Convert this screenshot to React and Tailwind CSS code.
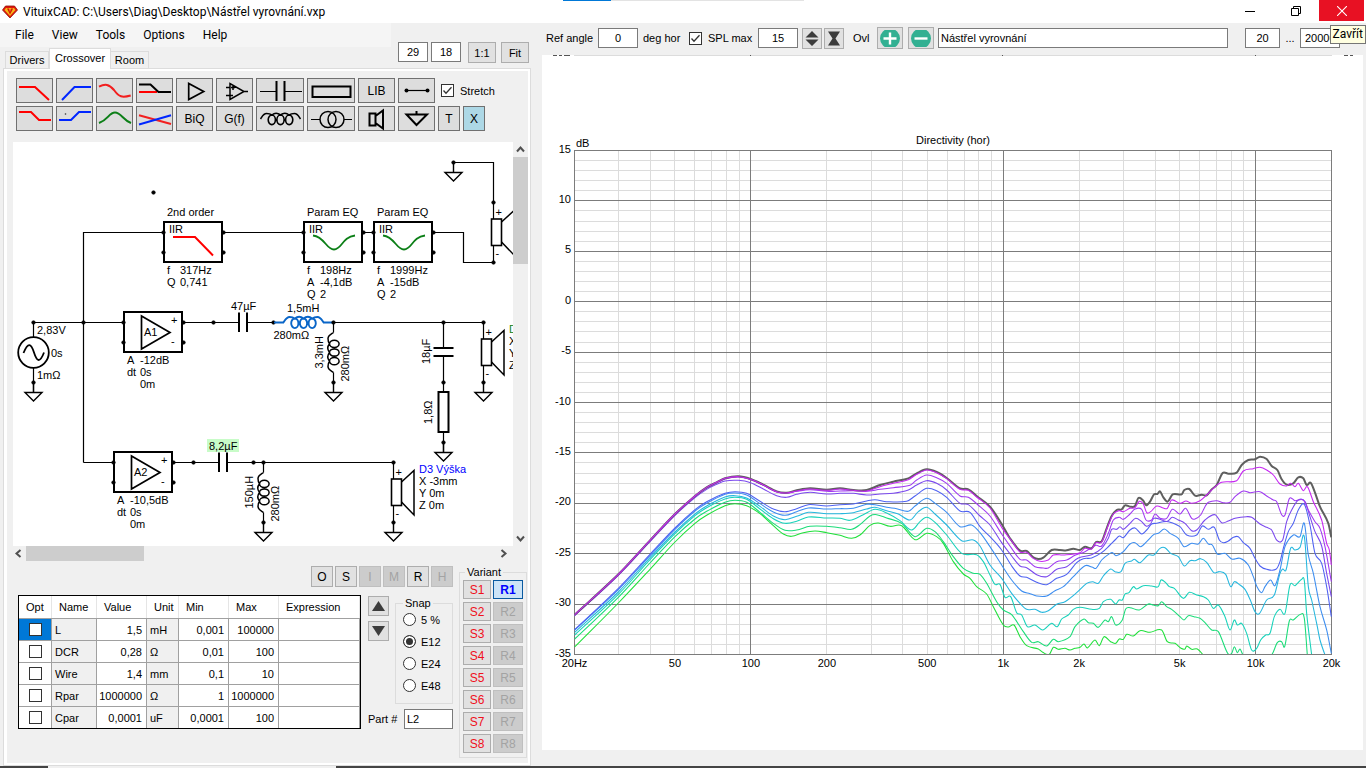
import clsx from "clsx";

const BTN = "flex items-center justify-center border border-[#adadad] bg-[#e1e1e1]";
const TOOL = "flex items-center justify-center h-[25px] border border-[#707070] bg-[#dddddd] text-[12px] leading-none shrink-0";
const FIELD = "border border-[#7a7a7a] bg-white outline-none h-5";

/* ── Small controls ── */

const Tick = ({ label, id, checked }) => (
  <span className="flex items-center gap-[6px] whitespace-nowrap">
    <span className="relative block size-[13px]">
      <input id={id} type="checkbox" defaultChecked={checked} className="peer block size-[13px] appearance-none border border-[#333] bg-white" aria-label={label} />
      <svg viewBox="0 0 13 13" className="pointer-events-none absolute inset-0 hidden size-[13px] peer-checked:block" fill="none" stroke="#333" strokeWidth="1.3">
        <path d="M2.5 6.5 5 9.2 10.5 3.2" />
      </svg>
    </span>
    {label && <label htmlFor={id}>{label}</label>}
  </span>
);

const Logo = () => (
  <svg width="16" height="14" viewBox="0 0 16 14">
    <path d="M3.5 1h9L15.5 5 8 13 .5 5z" fill="#e3170a" stroke="#8d1207" strokeWidth=".8" />
    <path d="M4 3h8l1.5 2L8 11 2.5 5z" fill="#f6b919" />
    <path d="M5 3.6h2L8 7l1-3.4h2.2L8 9.6z" fill="#d51408" />
  </svg>
);

const Chevron = ({ d }) => (
  <svg width="15" height="15" viewBox="0 0 15 15" fill="none" stroke="#505050" strokeWidth="2"><path d={d} /></svg>
);

/* ── Toolbar above the schematic ── */

const COIL = "M-20 0C-18 -3 -17 -5.5 -14 -5.5C-11.5 -5.5 -10 -5 -8.7 -4Q-4.4 -7.5 0 -4Q4.4 -7.5 8.7 -4C10 -5 11.5 -5.5 14 -5.5C17 -5.5 18 -3 20 0M-12.3 .8A3.6 4.8 0 1 1 -5.1 .8A3.6 4.8 0 1 1 -12.3 .8M-3.6 .8A3.6 4.8 0 1 1 3.6 .8A3.6 4.8 0 1 1 -3.6 .8M5.1 .8A3.6 4.8 0 1 1 12.3 .8A3.6 4.8 0 1 1 5.1 .8";

const icons = {
  "Low pass": <path d="M3 9H19L33 22" stroke="#f00" />,
  "High pass": <path d="M6 22 18.5 9H35" stroke="#0026ff" />,
  "Shelf": <path d="M3 8.7C9 5.5 13 6 18 12C23 19 26 20 34.7 17.5" stroke="#f21f1f" />,
  "Notch": <><path d="M3 14H21" stroke="#f00" /><path d="M3 6.5H14.5L22.5 14H35" stroke="#000" /></>,
  "Buffer": <path d="M12.7 5.5V21.5L27.7 13.5z" stroke="#000" strokeWidth="1.7" />,
  "Op amp": <path d="M14 5.5V21.5L28 13.5zM28 13.5H32M10 9.5H14M10 17.5H17M15 9.5H19M17 7.5V12" stroke="#000" strokeWidth="1.5" />,
  "Low shelf": <path d="M3 6H15L23 14H35" stroke="#f00" />,
  "High shelf": <><path d="M3 14H15L23 6H35" stroke="#0026ff" /><circle cx="9.5" cy="8" r=".8" fill="#333" stroke="none" /></>,
  "Peak": <path d="M3 17C12 14 13 6.5 19 6.5S27 14 35 17" stroke="#0c7f17" />,
  "Cross": <><path d="M3 9.3 35 18" stroke="#f21f1f" /><path d="M3 18.5 35 9.3" stroke="#0026ff" /></>,
  "Speaker": <path d="M11.5 7.5H17.5V19.5H11.5zM17.5 10 25 4.5V22.5L17.5 17" stroke="#000" />,
  "Wire": <><path d="M8 12.5H30" stroke="#000" strokeWidth="1.2" /><circle cx="8.5" cy="12.5" r="2" fill="#000" stroke="none" /><circle cx="29.5" cy="12.5" r="2" fill="#000" stroke="none" /></>,
  "Ground": <path d="M18.5 5V8.5M8.5 8.5H29L18.5 19z" stroke="#000" />,
};

const wideIcons = {
  "Capacitor": <><path d="M4 13.5H20.5M29 13.5H46" stroke="#000" strokeWidth="1.2" /><path d="M20.5 3V23M28.5 3V23" stroke="#000" /></>,
  "Resistor": <path d="M5.5 8.5H43.5V19H5.5z" stroke="#000" />,
  "Coil": <path d={COIL} transform="translate(24.5 13)" stroke="#000" strokeWidth="1.6" />,
  "Transformer": <><path d="M4 13.5H13M37 13.5H45" stroke="#000" strokeWidth="1.2" /><circle cx="21" cy="13.5" r="8" stroke="#000" strokeWidth="1.5" /><circle cx="29" cy="13.5" r="8" stroke="#000" strokeWidth="1.5" /></>,
};

const toolRows = [
  ["Low pass", "High pass", "Shelf", "Notch", "Buffer", "Op amp", "Capacitor", "Resistor", "LIB", "Wire"],
  ["Low shelf", "High shelf", "Peak", "Cross", "BiQ", "G(f)", "Coil", "Transformer", "Speaker", "Ground"],
];

const ToolButton = ({ name }) => {
  const wide = wideIcons[name];
  const icon = icons[name] || wide;
  return (
    <button aria-label={name} className={clsx(TOOL, wide ? "w-12" : "w-[37px]")}>
      {icon ? (
        <svg className="-m-px shrink-0" width={wide ? 48 : 37} height="25" viewBox={wide ? "0 0 48 25" : "0 0 37 25"} fill="none" strokeWidth="2">{icon}</svg>
      ) : name}
    </button>
  );
};

/* ── Schematic symbols ── */

const Dot = ({ x, y }) => <circle cx={x} cy={y} r="1.8" fill="#000" strokeWidth="0.6" />;

const Ground = ({ x, y }) => <path d={`M${x} ${y - 10}V${y}M${x - 8.5} ${y}H${x + 8.5}L${x} ${y + 8.5}z`} fill="#fff" strokeWidth="1.4" />;

const T = ({ x, y, children, fill = "#000", rot }) => (
  <text x={x} y={y} fill={fill} stroke="none" transform={rot ? `rotate(-90 ${x} ${y})` : undefined}>{children}</text>
);

const Block = ({ x, y }) => (
  <g>
    <rect x={x} y={y} width="58" height="40" fill="#fff" strokeWidth="2" />
    <Dot x={x - 0.5} y={y + 10.5} /><Dot x={x - 0.5} y={y + 30.5} />
    <Dot x={x + 59.5} y={y + 10.5} /><Dot x={x + 59.5} y={y + 30.5} />
  </g>
);

const Params = ({ x, y, rows }) => rows.map(([k, v], i) => (
  <g key={i}><T x={x} y={y + i * 12}>{k}</T><T x={x + 13} y={y + i * 12}>{v}</T></g>
));

const Amp = ({ x, y, name, gain }) => (
  <g>
    <Block x={x} y={y} />
    <path d={`M${x + 17.5} ${y + 4}V${y + 37}L${x + 46} ${y + 20.5}z`} fill="#fff" strokeWidth="1.7" />
    <T x={x + 20} y={y + 24}>{name}</T>
    <T x={x + 47} y={y + 12}>+</T>
    <T x={x + 47} y={y + 33}>-</T>
    <Params x={x + 3} y={y + 52} rows={[["A", gain], ["dt", "0s"], ["", "0m"]]} />
  </g>
);

const Filter = ({ x, name, rows, lowpass }) => (
  <g>
    <Block x={x} y={222} />
    <T x={x + 3} y={216}>{name}</T>
    <T x={x + 5} y={233}>IIR</T>
    {lowpass
      ? <path d={`M${x + 9} 237H${x + 31}L${x + 49} 255.5`} stroke="#f00" strokeWidth="2" />
      : <path d={`M${x + 9} 235.5C${x + 21} 237 ${x + 22} 249.5 ${x + 30} 249.5S${x + 38} 237 ${x + 51} 235.5`} stroke="#0c7f17" strokeWidth="1.8" />}
    <Params x={x + 3} y={274} rows={rows} />
  </g>
);

// y is the top of the coil box
const Driver = ({ x, y }) => (
  <g>
    <path d={`M${x} ${y - 17}V${y + 43}`} />
    <path d={`M${x + 8} ${y + 3}L${x + 20.5} ${y - 8.5}V${y + 36}L${x + 8} ${y + 23}`} fill="#fff" strokeWidth="1.5" />
    <rect x={x - 2} y={y} width="10" height="26.5" fill="#fff" strokeWidth="1.6" />
    <Dot x={x} y={y - 16.5} /><Dot x={x} y={y + 43.5} />
    <T x={x + 2} y={y - 3}>+</T>
    <T x={x + 2} y={y + 38}>-</T>
  </g>
);

const Shunt = ({ x, y, value }) => (
  <g>
    <path d={`M${x} ${y}V${y + 10}M${x} ${y + 50}V${y + 60}`} />
    <path d={COIL} transform={`translate(${x} ${y + 30}) rotate(-90)`} strokeWidth="1.5" />
    <Dot x={x} y={y} /><Dot x={x} y={y + 60} />
    <Ground x={x} y={y + 70} />
    <T x={x - 11} y={y + 46} rot>{value}</T>
    <T x={x + 15} y={y + 59} rot>280mΩ</T>
  </g>
);

const Schematic = () => (
  <svg className="block shrink-0 bg-white" width="500" height="404" viewBox="13 142 500 404" fill="none" stroke="#000" strokeWidth="1.2" fontSize="11" fontFamily="Liberation Sans, sans-serif">
    <path d="M83.5 462.5V232.5H163M223 232.5H303M363 232.5H375M433 232.5H463.5V262.5H493.5M453.5 162.5H493.5V203M33.5 322.5H123M183 322.5H239M247 322.5H283M333.5 322.5H483.5M83.5 462.5H113M173 462.5H219M227 462.5H393.5" />
    <Dot x={153.5} y={192.5} />
    <Filter x={164} name="2nd order" lowpass rows={[["f", "317Hz"], ["Q", "0,741"]]} />
    <Filter x={304} name="Param EQ" rows={[["f", "198Hz"], ["A", "-4,1dB"], ["Q", "2"]]} />
    <Filter x={374} name="Param EQ" rows={[["f", "1999Hz"], ["A", "-15dB"], ["Q", "2"]]} />
    <Ground x={453.5} y={172.5} /><Dot x={453.5} y={162.5} />
    <Driver x={493.5} y={219} />

    <path d="M33.5 322.5V392" />
    <circle cx="33.5" cy="352.5" r="15.3" fill="#fff" strokeWidth="1.8" />
    <path d="M23.5 353C28 342 31 343 34 352.5S40 363 44 352.5" strokeWidth="1.8" />
    <Dot x={33.5} y={322.5} /><Dot x={33.5} y={382.5} /><Dot x={83.5} y={322.5} />
    <Ground x={33.5} y={392.5} />
    <T x={37} y={334}>2,83V</T><T x={51} y={357}>0s</T><T x={37} y={379}>1mΩ</T>

    <Amp x={124} y={312} name="A1" gain="-12dB" />
    <Amp x={114} y={452} name="A2" gain="-10,5dB" />
    <Dot x={213.5} y={322.5} /><Dot x={273.5} y={322.5} />
    <path d="M239 312.5V332M247 312.5V332M219 452.5V472M227 452.5V472M433.5 348H453.5M433.5 356H453.5" strokeWidth="2" />
    <T x={231} y={310}>47µF</T>
    <g stroke="#0a66c8" strokeWidth="1.9">
      <path d="M274 322.5H284M323 322.5H333" />
      <path d={COIL} transform="translate(303.5 322.5)" />
    </g>
    <T x={287} y={312}>1,5mH</T><T x={273.5} y={339}>280mΩ</T>
    <Shunt x={333.5} y={322.5} value="3,3mH" />
    <Shunt x={263.5} y={462.5} value="150µH" />

    <path d="M443.5 322.5V348M443.5 356V452" />
    <rect x="438.5" y="392" width="10" height="40" fill="#fff" strokeWidth="2" />
    <Dot x={443.5} y={322.5} /><Dot x={443.5} y={382.5} /><Dot x={443.5} y={442.5} />
    <Ground x={443.5} y={452.5} />
    <T x={430} y={364} rot>18µF</T><T x={432} y={424} rot>1,8Ω</T>

    <Driver x={483.5} y={339} /><Ground x={483.5} y={392.5} />
    <T x={509} y={333} fill="#0c7f17">D</T><T x={509} y={345}>X</T><T x={509} y={357}>Y</T><T x={509} y={369}>Z</T>

    <rect x="207" y="439" width="32" height="13" fill="#c8fcc8" stroke="none" />
    <T x={209} y={450}>8,2µF</T>
    <Dot x={193.5} y={462.5} /><Dot x={253.5} y={462.5} />
    <Driver x={393.5} y={479} /><Ground x={393.5} y={532.5} />
    <T x={419} y={473} fill="#0000ff">D3 Výška</T>
    <T x={419} y={485}>X -3mm</T><T x={419} y={497}>Y 0m</T><T x={419} y={509}>Z 0m</T>
  </svg>
);

/* ── Directivity chart ── */

// x,y pairs in thirds of a pixel, measured from (560, 440)
const curves = [
  { color: "#1fe03a", p: "44,621 175,489 270,388 345,306 405,250 440,226 495,197 525,191 560,197 600,221 640,257 670,282 695,289 730,278 765,273 800,278 840,286 875,295 900,285 930,256 955,249 990,259 1025,257 1065,299 1100,280 1130,290 1150,310 1180,365 1210,402 1230,415 1250,440 1280,462 1300,500 1330,555 1345,561 1362,555 1380,590 1400,617 1435,627 1448,637 1468,643 1480,622 1495,628 1515,625 1530,630 1545,625 1560,622 1572,612 1582,624 1605,600 1618,617 1632,590 1652,605 1667,610 1678,597 1690,598 1700,583 1720,588 1740,572 1770,577 1805,570 1822,605 1845,610 1863,625 1875,627 1880,618 1895,628 1912,627 1930,645" },
  { color: "#1bdc78", p: "44,597 175,472 270,369 345,290 405,237 440,214 495,187 525,181 560,187 600,217 640,250 675,271 710,270 750,259 800,259 840,263 875,268 900,254 930,228 950,224 980,234 1025,250 1065,290 1100,265 1125,275 1150,305 1180,350 1210,385 1240,400 1260,403 1280,430 1310,485 1330,510 1355,524 1390,575 1415,607 1435,605 1460,618 1480,598 1495,605 1530,590 1545,560 1572,537 1585,548 1600,550 1615,562 1635,540 1645,545 1655,530 1667,555 1687,540 1697,507 1710,503 1738,510 1765,492 1780,495 1795,497 1805,485 1820,500 1835,508 1860,530 1872,540 1885,527 1902,530 1920,535 1935,548 1955,570 1975,575 2003,640 2015,640 2023,620 2032,638 2040,627 2050,645 2134,645 2152,608 2165,605 2174,620 2188,543 2200,540 2222,523 2233,535 2242,645" },
  { color: "#17d2ba", p: "44,585 175,463 270,359 345,281 405,227 440,203 495,177 525,172 560,178 600,207 640,236 675,250 710,244 745,231 800,234 840,235 870,241 910,224 945,208 980,219 1020,242 1055,270 1080,245 1100,232 1125,247 1160,285 1205,340 1250,344 1270,365 1290,405 1305,433 1320,433 1335,472 1352,470 1370,518 1385,525 1402,560 1425,555 1448,570 1475,550 1492,560 1505,537 1525,525 1540,508 1560,502 1595,508 1618,505 1630,485 1652,478 1667,492 1677,480 1687,480 1695,462 1707,458 1720,440 1730,447 1750,437 1775,438 1795,440 1803,420 1817,428 1828,440 1843,445 1870,475 1888,457 1910,465 1930,470 1945,480 1960,505 1975,495 1995,530 2010,570 2023,540 2032,555 2045,550 2060,580 2075,630 2090,625 2102,600 2117,585 2130,580 2143,530 2160,508 2175,520 2190,435 2205,437 2225,418 2233,422 2240,520 2255,645" },
  { color: "#25b7de", p: "44,577 175,456 270,353 345,276 405,222 440,198 495,171 525,167 560,174 600,199 640,228 675,239 710,229 745,217 800,221 840,221 880,218 920,207 945,202 980,212 1015,222 1050,240 1075,215 1100,202 1125,222 1160,255 1205,302 1240,300 1260,318 1290,375 1325,415 1355,460 1380,490 1400,508 1425,508 1445,517 1465,512 1490,493 1515,485 1550,458 1580,430 1598,425 1615,430 1630,408 1652,387 1665,395 1683,395 1695,370 1715,363 1723,358 1740,368 1765,345 1782,345 1800,325 1815,323 1832,340 1855,350 1873,378 1890,362 1905,362 1922,356 1940,367 1962,398 1978,395 1997,403 2012,440 2023,425 2040,435 2055,448 2070,478 2085,515 2098,521 2120,480 2143,465 2160,400 2168,387 2178,390 2192,325 2205,330 2220,322 2233,290 2245,440 2255,480 2272,560 2280,600 2295,645" },
  { color: "#3c8df0", p: "44,570 175,449 270,347 345,268 405,213 440,190 495,163 525,159 560,165 600,191 640,216 675,226 710,215 745,204 800,207 840,206 880,205 920,193 945,194 980,202 1010,206 1045,214 1065,198 1100,175 1125,190 1160,217 1200,260 1235,255 1260,278 1290,320 1325,375 1355,420 1385,453 1410,461 1430,468 1460,468 1485,452 1510,440 1540,410 1575,377 1598,382 1608,385 1625,360 1650,340 1658,338 1668,347 1690,335 1710,312 1725,308 1742,320 1760,305 1782,283 1795,280 1813,267 1830,280 1855,295 1872,320 1895,310 1915,312 1930,295 1945,312 1957,315 1972,342 1995,340 2015,357 2040,355 2065,375 2080,410 2090,438 2105,458 2115,440 2132,420 2145,437 2160,390 2175,320 2200,285 2220,290 2233,250 2245,345 2260,400 2280,500 2300,570 2314,640" },
  { color: "#4f62f2", p: "44,569 175,445 270,343 345,264 405,209 440,185 495,160 525,155 560,160 600,184 640,207 675,215 710,206 745,194 800,198 840,194 880,192 920,183 945,179 980,185 1040,184 1065,168 1100,145 1130,152 1160,172 1200,213 1230,217 1260,260 1290,290 1325,330 1355,378 1380,408 1400,412 1430,427 1460,434 1490,415 1520,403 1550,368 1570,356 1595,354 1625,338 1650,315 1665,300 1678,288 1690,293 1710,270 1725,264 1745,282 1760,270 1775,252 1790,250 1810,245 1825,245 1860,260 1880,285 1910,285 1927,258 1945,268 1963,262 1978,300 1990,308 2005,303 2020,292 2035,290 2050,308 2070,325 2085,355 2100,378 2120,388 2148,388 2160,365 2170,325 2185,275 2200,250 2215,210 2233,193 2250,255 2265,340 2285,370 2300,440 2314,530" },
  { color: "#7a48ee", p: "44,527 175,406 270,305 345,226 405,173 440,148 470,133 495,123 535,121 572,128 610,147 650,167 680,172 710,163 750,157 800,162 840,160 880,160 920,165 960,162 1000,160 1045,150 1070,135 1100,122 1130,130 1160,150 1200,190 1225,194 1260,228 1290,255 1325,308 1355,348 1380,378 1400,383 1430,404 1460,410 1490,388 1520,380 1555,354 1595,344 1625,325 1645,295 1655,268 1670,268 1680,260 1690,268 1710,250 1727,235 1745,245 1758,258 1770,254 1782,235 1805,240 1822,244 1837,232 1855,240 1875,250 1895,272 1910,270 1935,240 1965,224 1985,248 2005,243 2025,235 2060,230 2075,232 2100,252 2120,262 2135,270 2150,300 2168,300 2180,245 2195,210 2215,180 2235,185 2250,230 2265,275 2285,318 2300,400 2314,470" },
  { color: "#a03af2", p: "44,526 175,405 270,303 345,224 405,170 440,144 470,129 495,117 535,111 572,119 610,136 650,156 680,160 710,154 750,149 800,154 840,153 880,152 920,154 960,148 1000,143 1050,136 1070,120 1100,105 1130,113 1160,130 1200,168 1225,172 1260,200 1290,228 1325,282 1355,325 1380,358 1400,360 1425,380 1450,384 1465,384 1490,365 1520,360 1545,346 1575,335 1608,316 1625,318 1645,280 1660,240 1678,232 1690,238 1710,222 1725,207 1745,208 1758,240 1775,240 1785,222 1800,235 1820,235 1837,208 1860,222 1877,205 1895,235 1905,237 1922,225 1935,200 1945,187 1970,182 1990,188 2010,187 2025,170 2050,153 2070,158 2100,155 2120,168 2140,180 2150,185 2165,224 2175,225 2188,176 2205,182 2230,180 2245,210 2265,245 2280,265 2295,320 2314,425" },
  { color: "#5f5f5f", width: 6, p: "44,524 175,403 270,301 345,222 405,168 440,142 470,127 495,115 535,109 572,117 610,134 650,154 680,158 710,151 750,145 800,149 840,145 880,150 920,150 960,135 1000,125 1045,115 1070,100 1100,88 1130,96 1160,114 1200,145 1225,148 1250,168 1290,200 1325,252 1350,295 1380,332 1400,333 1420,352 1435,357 1450,353 1475,330 1500,330 1520,331 1540,326 1560,330 1575,320 1595,325 1608,306 1625,304 1640,265 1655,228 1670,210 1685,208 1695,196 1710,200 1725,198 1735,174 1750,182 1758,196 1770,185 1782,163 1792,162 1800,154 1810,172 1823,185 1838,163 1865,163 1873,150 1888,147 1905,167 1925,164 1940,166 1955,148 1970,135 1988,99 2005,101 2030,98 2045,75 2065,60 2085,58 2100,50 2120,57 2135,78 2152,90 2165,118 2180,134 2200,130 2215,112 2230,115 2240,135 2252,128 2265,158 2280,200 2305,250 2314,292" },
  { color: "#c626f2", p: "44,524 175,403 270,301 345,222 405,168 440,142 470,127 495,115 535,110 572,118 610,135 650,155 680,159 710,153 750,147 800,151 840,147 880,151 920,153 960,140 1000,130 1045,119 1070,103 1100,90 1130,98 1160,116 1200,148 1225,151 1250,171 1290,204 1325,262 1355,303 1380,336 1400,337 1420,355 1440,364 1465,360 1480,345 1510,345 1560,338 1575,325 1595,327 1608,308 1625,306 1645,255 1660,222 1678,212 1690,215 1710,205 1725,203 1738,184 1750,192 1760,218 1772,215 1790,198 1810,204 1822,205 1835,180 1860,190 1878,183 1895,190 1920,182 1940,165 1960,145 1985,127 2030,122 2050,93 2080,86 2100,82 2120,90 2140,105 2160,132 2180,138 2192,130 2205,140 2215,130 2230,152 2242,140 2260,185 2285,240 2300,310 2308,330 2314,375" },
];

function smooth(str) {
  const p = str.split(" ").map((s) => s.split(",").map(Number));
  let d = `M${p[0]}`;
  for (let i = 0; i < p.length - 1; i++) {
    const a = p[i - 1] || p[i];
    const b = p[i];
    const c = p[i + 1];
    const e = p[i + 2] || c;
    // handle length follows the x step, slope comes from the neighbours
    const k = (c[0] - b[0]) / 3;
    const s1 = (c[1] - a[1]) / (c[0] - a[0]);
    const s2 = (e[1] - b[1]) / (e[0] - b[0]);
    d += `C${b[0] + k} ${b[1] + s1 * k} ${c[0] - k} ${c[1] - s2 * k} ${c}`;
  }
  return d;
}

const fx = (f) => 574.5 + (Math.log10(f / 20) / 3) * 757;
const dy = (db) => 150.5 + (15 - db) * 10.08;

const minorFreqs = [30, 40, 50, 60, 70, 80, 90, 200, 300, 400, 500, 600, 700, 800, 900, 2000, 3000, 4000, 5000, 6000, 7000, 8000, 9000];
const freqLabels = [[20, "20Hz"], [50, "50"], [100, "100"], [200, "200"], [500, "500"], [1000, "1k"], [2000, "2k"], [5000, "5k"], [10000, "10k"], [20000, "20k"]];
const dbs = Array.from({ length: 51 }, (_, i) => 15 - i);

const Chart = () => (
  <svg className="block w-full" viewBox="542 55 821 695" fontSize="11" fontFamily="Liberation Sans, sans-serif">
    <clipPath id="plot"><rect x="574" y="150" width="758" height="504" /></clipPath>
    <path d="M574 55.5H1332" stroke="#dcdcdc" />
    <path d="M553 55.5H557M559 55.5H562M564 55.5H570M750 55.5H751M1002 55.5H1003M1255 55.5H1256M1344 55.5H1348M1350 55.5H1353" stroke="#555" />
    <g stroke="#dcdcdc" shapeRendering="crispEdges">
      {dbs.filter((d) => d % 5).map((d) => <path key={d} d={`M574 ${dy(d)}H1332`} />)}
      {minorFreqs.map((f) => <path key={f} d={`M${fx(f)} 150V654`} />)}
    </g>
    <g stroke="#7c7c7c" shapeRendering="crispEdges">
      {dbs.filter((d) => d % 5 === 0).map((d) => <path key={d} d={`M574 ${dy(d)}H1332`} />)}
      {[20, 100, 1000, 10000, 20000].map((f) => <path key={f} d={`M${fx(f)} 150V655`} />)}
    </g>
    <g clipPath="url(#plot)" fill="none">
      {curves.map((c) => (
        <path key={c.color} d={smooth(c.p)} transform="translate(560 440) scale(0.33333)" stroke={c.color} strokeWidth={c.width || 3.2} strokeLinejoin="round" />
      ))}
    </g>
    <text x="953" y="144" textAnchor="middle">Directivity (hor)</text>
    <text x="576" y="147">dB</text>
    {dbs.filter((d) => d % 5 === 0).map((d) => <text key={d} x="571" y={dy(d) + 2} textAnchor="end">{d}</text>)}
    {freqLabels.map(([f, t]) => <text key={f} x={fx(f)} y="667" textAnchor="middle">{t}</text>)}
  </svg>
);

/* ── Lower part of the crossover tab ── */

const rows = [
  ["L", "1,5", "mH", "0,001", "100000"],
  ["DCR", "0,28", "Ω", "0,01", "100"],
  ["Wire", "1,4", "mm", "0,1", "10"],
  ["Rpar", "1000000", "Ω", "1", "1000000"],
  ["Cpar", "0,0001", "uF", "0,0001", "100"],
];

const cell = "h-[22px] border-t border-r border-[#a0a0a0]";

const ParamTable = () => (
  <table className="w-[343px] table-fixed border-separate border-spacing-0 border border-black bg-white">
    <colgroup>
      <col className="w-[33px]" /><col className="w-[45px]" /><col className="w-[50px]" /><col className="w-8" /><col className="w-[50px]" /><col className="w-[50px]" /><col />
    </colgroup>
    <thead>
      <tr className="h-[22px] text-left">
        {["Opt", "Name", "Value", "Unit", "Min", "Max", "Expression"].map((h) => (
          <th key={h} className="border-r border-[#e5e5e5] pl-[7px] font-normal">{h}</th>
        ))}
      </tr>
    </thead>
    <tbody>
      {rows.map(([name, value, unit, min, max], i) => (
        <tr key={name}>
          <td className={clsx(cell, i === 0 && "bg-[#0078d7]")}>
            <span className="flex justify-center">
              <input type="checkbox" aria-label={`Optimize ${name}`} className="block size-[13px] appearance-none border border-[#333] bg-white" />
            </span>
          </td>
          <td className={clsx(cell, "bg-[#f0f0f0] pl-[3px]")}>{name}</td>
          <td className={clsx(cell, "pr-1 text-right")}>{value}</td>
          <td className={clsx(cell, "bg-[#f0f0f0] pl-[3px]")}>{unit}</td>
          <td className={clsx(cell, "pr-1 text-right")}>{min}</td>
          <td className={clsx(cell, "pr-1 text-right")}>{max}</td>
          <td className={cell}></td>
        </tr>
      ))}
    </tbody>
  </table>
);

const Snap = () => (
  <fieldset className="h-[109px] w-[58px] border border-[#dcdcdc] pl-[7px]">
    <legend className="px-[2px] leading-4">Snap</legend>
    <div className="flex flex-col gap-[9px] pt-[2px]">
      {["5 %", "E12", "E24", "E48"].map((s) => (
        <label key={s} className="flex h-[13px] items-center gap-[5px] whitespace-nowrap">
          <input type="radio" name="snap" defaultChecked={s === "E12"} className="size-[13px] shrink-0 appearance-none rounded-full border border-[#333] bg-white checked:bg-[#333] checked:shadow-[inset_0_0_0_2px_white]" />
          {s}
        </label>
      ))}
    </div>
  </fieldset>
);

const Variant = () => (
  <fieldset className="h-[194px] w-[68px] border border-[#dcdcdc] px-[3px]">
    <legend className="ml-[2px] px-[2px] leading-4">Variant</legend>
    <div className="grid grid-cols-[28px_30px] gap-x-[2px] gap-y-[3px] text-[12px]">
      {[1, 2, 3, 4, 5, 6, 7, 8].map((n) => (
        <div key={n} className="contents">
          <button className="h-[19px] border border-[#adadad] bg-[#e1e1e1] leading-none text-[#f0101c]">S{n}</button>
          <button
            disabled={n > 1}
            className={clsx("h-[19px] border leading-none", n === 1 ? "border-[#0a5aa0] bg-[#cce4f7] font-bold text-[#0000ff]" : "border-[#bfbfbf] bg-[#cccccc] text-[#a3a3a3]")}
          >
            R{n}
          </button>
        </div>
      ))}
    </div>
  </fieldset>
);

const Arrow = ({ d, label }) => (
  <button aria-label={label} className={clsx(BTN, "h-5 w-[21px]")}>
    <svg width="15" height="12" viewBox="0 0 15 12" fill="#3c3c3c"><path d={d} /></svg>
  </button>
);

const CrossoverTab = () => (
  <section className="ml-[3px] flex flex-1 flex-col border border-[#dcdcdc] bg-white p-[2px] pl-[3px]">
    <div className="flex-1 bg-[#f0f0f0]">
      <div className="flex flex-col gap-[3px] pt-[7px] pl-[9px]">
        <div className="flex items-center gap-[3px]">
          {toolRows[0].map((n) => <ToolButton key={n} name={n} />)}
          <span className="pl-[3px]"><Tick id="stretch" label="Stretch" checked /></span>
        </div>
        <div className="flex items-center gap-[3px]">
          {toolRows[1].map((n) => <ToolButton key={n} name={n} />)}
          <button className={clsx(TOOL, "w-[22px]")}>T</button>
          <button className="flex h-[25px] w-[22px] items-center justify-center border border-[#707070] bg-[#add8e6] text-[12px] leading-none">X</button>
        </div>
      </div>

      <div className="mt-[11px] ml-[6px] flex">
        <Schematic />
        <div className="flex w-[15px] flex-col items-center justify-between">
          <div>
            <Chevron d="M4 9.5 7.5 5.5 11 9.5" />
            <div className="h-[107px] w-[15px] bg-[#cdcdcd]" />
          </div>
          <Chevron d="M4 5.5 7.5 9.5 11 5.5" />
        </div>
      </div>
      <div className="ml-[4px] flex w-[500px]">
        <Chevron d="M9.5 4 5.5 7.5 9.5 11" />
        <div className="h-[15px] w-[118px] bg-[#cdcdcd]" />
        <span className="flex-1" />
        <Chevron d="M5.5 4 9.5 7.5 5.5 11" />
      </div>

      <div className="flex justify-between pr-px pl-[11px]">
        <div>
          <div className="flex justify-end gap-[2px] pt-[5px] text-[12px]">
            {["O", "S", "I", "M", "R", "H"].map((b) => {
              const off = "IMH".includes(b);
              return (
                <button key={b} disabled={off} className={clsx("h-[21px] w-[22px] border leading-none", off ? "border-[#bfbfbf] bg-[#cccccc] text-[#a3a3a3]" : "border-[#adadad] bg-[#e1e1e1]")}>{b}</button>
              );
            })}
          </div>
          <div className="flex gap-[7px] pt-2">
            <ParamTable />
            <div className="flex w-[85px] flex-col justify-between">
              <div className="flex justify-between">
                <div className="flex flex-col gap-[5px] pt-px">
                  <Arrow label="Move up" d="M7.5 1 14 11H1z" />
                  <Arrow label="Move down" d="M7.5 11 14 1H1z" />
                </div>
                <Snap />
              </div>
              <div className="flex items-center justify-between">
                <label htmlFor="part">Part #</label>
                <input id="part" defaultValue="L2" className={clsx(FIELD, "w-[49px] px-[2px]")} />
              </div>
            </div>
          </div>
        </div>
        <div className="pt-[3px]"><Variant /></div>
      </div>
    </div>
  </section>
);

/* ── Toolbar above the chart ── */

const ChartToolbar = () => (
  <div className="flex h-8 items-center pb-[2px] pl-[15px]">
    <label htmlFor="angle" className="w-[52px]">Ref angle</label>
    <input id="angle" defaultValue="0" className={clsx(FIELD, "w-10 text-center")} />
    <span className="w-[51px] pl-[5px]">deg hor</span>
    <span className="w-[69px]"><Tick id="splmax" label="SPL max" checked /></span>
    <input aria-label="SPL max value" defaultValue="15" className={clsx(FIELD, "w-10 text-center")} />
    <button aria-label="Expand range" className={clsx(BTN, "ml-1 h-[21px] w-5")}>
      <svg width="14" height="17" viewBox="0 0 14 17" fill="#3c3c3c"><path d="M7 1 13.5 7.5H.5zM7 16 13.5 9.5H.5z" /></svg>
    </button>
    <button aria-label="Shrink range" className={clsx(BTN, "ml-[2px] h-[21px] w-5")}>
      <svg width="14" height="17" viewBox="0 0 14 17" fill="#3c3c3c"><path d="M1 1.5H13L8.5 8.5 13 15.5H1L5.5 8.5z" /></svg>
    </button>
    <span className="w-[33px] pl-[9px]">Ovl</span>
    <button aria-label="Add overlay" className={clsx(BTN, "h-[22px] w-[26px]")}>
      <svg width="20" height="17" viewBox="0 0 20 17"><circle cx="10" cy="8.5" r="10" fill="#32b092" /><path d="M3.5 8.5H16.5M10 2.5V14.5" stroke="#fff" strokeWidth="2.4" /></svg>
    </button>
    <button aria-label="Remove overlay" className={clsx(BTN, "ml-[5px] h-[22px] w-[26px]")}>
      <svg width="20" height="17" viewBox="0 0 20 17"><circle cx="10" cy="8.5" r="10" fill="#32b092" /><path d="M3.5 8.5H16.5" stroke="#fff" strokeWidth="2.4" /></svg>
    </button>
    <input aria-label="Overlay name" defaultValue="Nástřel vyrovnání" className={clsx(FIELD, "ml-1 min-w-0 flex-1 px-[2px]")} />
    <input aria-label="Frequency from" defaultValue="20" className={clsx(FIELD, "ml-[17px] w-[35px] text-center")} />
    <span className="w-5 text-center">...</span>
    <input aria-label="Frequency to" defaultValue="20000" className={clsx(FIELD, "mr-[26px] w-10 px-1")} />
  </div>
);

const TitleBar = () => (
  <header className="relative flex h-[23px] items-center justify-between bg-white pl-[2px]">
    <div className="absolute inset-x-0 top-0 flex h-px">
      <span className="w-[563px]" /><span className="w-12 bg-[#0078d7]" /><span className="w-[193px] bg-[#e3e3e3]" />
    </div>
    <h1 className="flex items-center gap-[5px] font-[Roboto,sans-serif] text-[12px]"><Logo />VituixCAD: C:\Users\Diag\Desktop\Nástřel vyrovnání.vxp</h1>
    <div className="flex self-start">
      <button aria-label="Minimize" className="flex h-[21px] w-[46px] items-center justify-center">
        <svg width="10" height="10" viewBox="0 0 10 10"><path d="M0 5.5H10" stroke="#000" /></svg>
      </button>
      <button aria-label="Restore" className="flex h-[21px] w-[46px] items-center justify-center">
        <svg width="10" height="10" viewBox="0 0 10 10" fill="none" stroke="#000"><path d="M.5 2.5H7.5V9.5H.5zM2.5 2.5V.5H9.5V7.5H7.5" /></svg>
      </button>
      <button aria-label="Close" className="mr-[2px] flex h-[21px] w-[45px] items-center justify-center bg-[#e81123]">
        <svg width="10" height="10" viewBox="0 0 10 10" stroke="#fff" strokeWidth="1.1"><path d="M0 0 10 10M10 0 0 10" /></svg>
      </button>
    </div>
    <div role="tooltip" className="absolute top-[25px] right-0 z-10 h-[19px] border border-[#767676] bg-[#ffffe1] px-[2px] font-[Roboto,sans-serif] text-[12px] leading-[17px]">Zavřít</div>
  </header>
);

export default function App() {
  return (
    <div className="flex min-h-screen flex-col bg-[#f0f0f0] font-['Liberation_Sans',sans-serif] text-[11px] leading-4 text-black">
      <TitleBar />
      <main className="flex flex-1">
        <div className="flex w-[531px] shrink-0 flex-col">
          <div className="flex h-[45px]">
            <div className="flex w-[391px] flex-col justify-between">
              <nav className="flex h-6 items-center gap-[18px] bg-[#f5f5f5] pl-[15px] font-[Roboto,sans-serif] text-[12px]">
                {["File", "View", "Tools", "Options", "Help"].map((m) => <button key={m}>{m}</button>)}
              </nav>
              <div role="tablist" className="z-10 -mb-px flex items-end pl-[5px]">
                <button role="tab" className="h-[18px] w-11 border border-[#dcdcdc] leading-none">Drivers</button>
                <button role="tab" aria-selected="true" className="h-[21px] w-[62px] border border-b-0 border-[#dcdcdc] bg-white pb-[2px] leading-none">Crossover</button>
                <button role="tab" className="h-[18px] w-[38px] border border-l-0 border-[#dcdcdc] leading-none">Room</button>
              </div>
            </div>
            <div className="flex items-start pt-[19px] pl-[7px]">
              <input aria-label="Columns" defaultValue="29" className={clsx(FIELD, "w-[30px] text-center")} />
              <input aria-label="Rows" defaultValue="18" className={clsx(FIELD, "ml-[3px] w-[30px] text-center")} />
              <button className={clsx(BTN, "ml-[7px] h-[21px] w-7")}>1:1</button>
              <button className={clsx(BTN, "ml-[5px] h-[21px] w-7")}>Fit</button>
            </div>
          </div>
          <CrossoverTab />
        </div>
        <div className="min-w-0 flex-1">
          <ChartToolbar />
          <div className="mr-[3px] ml-[11px] bg-white"><Chart /></div>
        </div>
      </main>
      <footer className="flex h-[2px] bg-[#444]">
        <span className="ml-12 w-72 bg-[#f0f0f0]" />
      </footer>
    </div>
  );
}
